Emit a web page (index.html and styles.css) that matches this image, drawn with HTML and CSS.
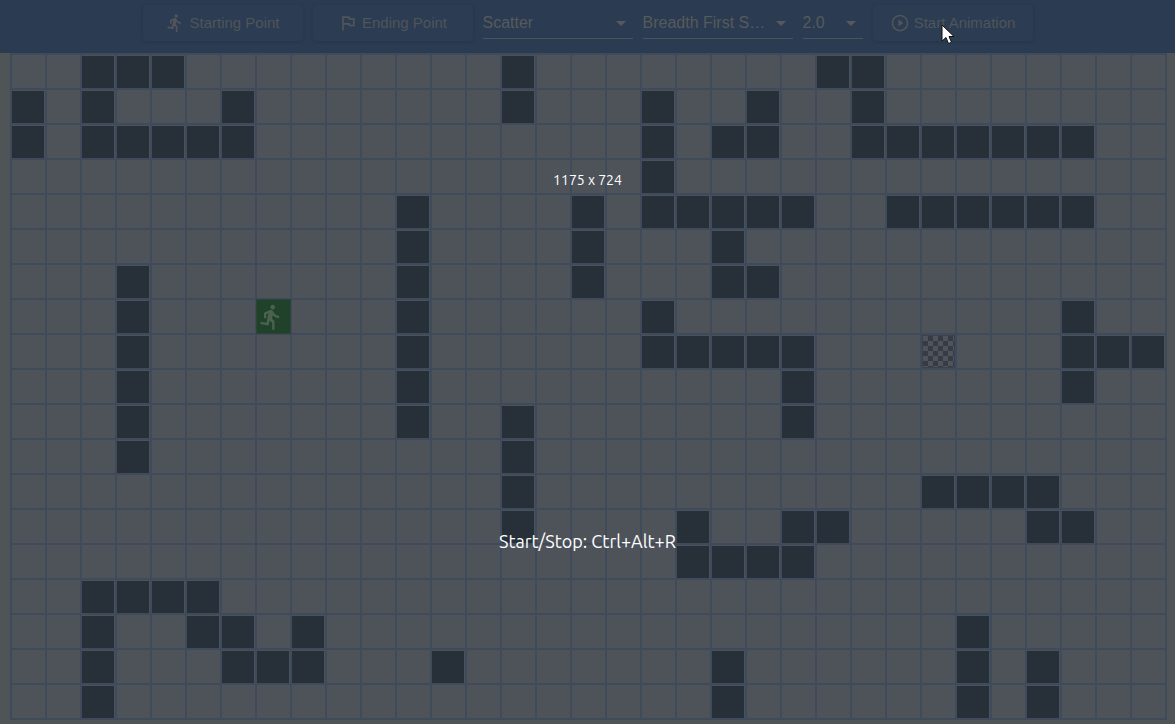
FILE: index.html
```html
<!DOCTYPE html>
<html lang="en">
<head>
<meta charset="utf-8">
<meta name="viewport" content="width=device-width, initial-scale=1">
<title>Pathfinding Visualizer</title>
<link rel="stylesheet" href="styles.css">
</head>
<body>
<header class="toolbar">
  <button class="btn" type="button">
    <svg class="icon" viewBox="0 0 24 24" aria-hidden="true"><path d="M13.49 5.48c1.1 0 2-.9 2-2s-.9-2-2-2-2 .9-2 2 .9 2 2 2zm-3.6 13.9l1-4.4 2.1 2v6h2v-7.5l-2.1-2 .6-3c1.3 1.5 3.3 2.5 5.5 2.5v-2c-1.9 0-3.5-1-4.3-2.4l-1-1.6c-.4-.6-1-1-1.7-1-.3 0-.5.1-.8.1l-5.2 2.2v4.7h2v-3.4l1.8-.7-1.6 8.1-4.9-1-.4 2 7 1.4z"/></svg>
    <span>Starting Point</span>
  </button>
  <button class="btn" type="button">
    <svg class="icon" viewBox="0 0 24 24" aria-hidden="true"><path d="M12.36 6l.4 2H18v6h-3.36l-.4-2H7V6h5.36M14 4H5v17h2v-7h5.6l.4 2h7V6h-5.6L14 4z"/></svg>
    <span>Ending Point</span>
  </button>
  <div class="field">
    <select class="select" aria-label="Maze pattern"><option>Scatter</option></select>
    <svg class="arrow" viewBox="0 0 24 24" aria-hidden="true"><path d="M7 10l5 5 5-5z"/></svg>
  </div>
  <div class="field">
    <select class="select" aria-label="Algorithm"><option>Breadth First Search</option></select>
    <svg class="arrow" viewBox="0 0 24 24" aria-hidden="true"><path d="M7 10l5 5 5-5z"/></svg>
  </div>
  <div class="field field-small">
    <select class="select" aria-label="Speed"><option>2.0</option></select>
    <svg class="arrow" viewBox="0 0 24 24" aria-hidden="true"><path d="M7 10l5 5 5-5z"/></svg>
  </div>
  <button class="btn" type="button">
    <svg class="icon" viewBox="0 0 24 24" aria-hidden="true"><path d="M10 16.5l6-4.5-6-4.5v9zM12 2C6.48 2 2 6.48 2 12s4.48 10 10 10 10-4.48 10-10S17.52 2 12 2zm0 18c-4.41 0-8-3.59-8-8s3.59-8 8-8 8 3.59 8 8-3.59 8-8 8z"/></svg>
    <span>Start Animation</span>
  </button>
</header>
<main class="board">
  <div class="grid" id="grid"></div>
</main>
<div class="overlay">
  <p class="size-label">1175 x 724</p>
  <p class="hint-label">Start/Stop: Ctrl+Alt+R</p>
</div>
<svg class="cursor" viewBox="0 0 13 21" aria-hidden="true"><path d="M1 1v16l4-3.5 2.500 6 3-1.300-2.500-5.700h5z"/></svg>
<template id="runner">
  <svg class="runner" viewBox="0 0 24 24"><path d="M13.49 5.48c1.1 0 2-.9 2-2s-.9-2-2-2-2 .9-2 2 .9 2 2 2zm-3.6 13.9l1-4.4 2.1 2v6h2v-7.5l-2.1-2 .6-3c1.3 1.5 3.3 2.5 5.5 2.5v-2c-1.9 0-3.5-1-4.3-2.4l-1-1.6c-.4-.6-1-1-1.7-1-.3 0-.5.1-.8.1l-5.2 2.2v4.7h2v-3.4l1.8-.7-1.6 8.1-4.9-1-.4 2 7 1.4z"/></svg>
</template>
<script src="grid.js"></script>
</body>
</html>
```
FILE: styles.css
```css
* { box-sizing: border-box; }

body {
  margin: 0;
  min-height: 100vh;
  position: relative;
  overflow: hidden;
  background: #4f5457;
  font-family: "Liberation Sans", Arial, sans-serif;
}

.toolbar {
  display: flex;
  justify-content: center;
  gap: 10px;
  height: 53px;
  padding-top: 5px;
  background: #2b3b51;
}

.btn {
  display: flex;
  align-items: center;
  justify-content: center;
  gap: 4px;
  width: 160px;
  height: 36px;
  padding: 0 0 1px;
  border: 0;
  border-radius: 4px;
  background: #2c3c53;
  box-shadow: 0 1px 3px #25354a;
  color: #4f5559;
  font: 15px "Liberation Sans", Arial, sans-serif;
}

.icon { width: 20px; height: 20px; fill: currentColor; }

.field {
  position: relative;
  width: 150px;
  height: 34px;
  border-bottom: 1px solid #4b535c;
}

.field-small { width: 60px; }

.select {
  appearance: none;
  width: 100%;
  height: 100%;
  padding: 2px 24px 0 0;
  border: 0;
  background: none;
  color: #565a5d;
  font: 16px "Liberation Sans", Arial, sans-serif;
  text-overflow: ellipsis;
}

.arrow {
  position: absolute;
  top: 6px;
  right: 0;
  width: 24px;
  height: 24px;
  fill: #565a5d;
  pointer-events: none;
}

.board { padding: 0 10px; }

.grid {
  display: grid;
  grid-template-columns: repeat(33, 33px);
  grid-auto-rows: 33px;
  gap: 2px;
  width: max-content;
  padding: 2px;
  background: #3f4b5a;
}

.cell { background: #4e535a; }

.wall {
  background: #272f38;
  border-top: 1px solid #48525c;
  border-right: 1px solid #48525c;
}

.start {
  display: grid;
  place-items: center start;
  background: #21422a;
  box-shadow: 0 0 0 1px #2c4538;
}

.runner { width: 28px; height: 28px; fill: #4a624e; }

.finish {
  border: 1px solid #3b424e;
  background: repeating-conic-gradient(#353c48 0 25%, #505459 0 50%) 0 0 / 10px 10px;
}

.overlay {
  position: absolute;
  inset: 0;
  pointer-events: none;
  color: #fff;
  font-family: Ubuntu, "Noto Sans", sans-serif;
  text-align: center;
}

.size-label, .hint-label {
  position: absolute;
  left: 0;
  right: 0;
  margin: 0;
}

.size-label { top: 170px; font-size: 14px; line-height: 20px; }
.hint-label { top: 529px; font-size: 18px; line-height: 24px; }

.cursor {
  position: absolute;
  left: 941px;
  top: 24px;
  width: 13px;
  height: 21px;
  fill: #fff;
  stroke: #111;
  stroke-width: 1px;
}
```
FILE: grid.js
```js
// Wall columns for each row of the board.
const COLUMNS = 33;
const walls = [
  [2, 3, 4, 14, 23, 24],
  [0, 2, 6, 14, 18, 21, 24],
  [0, 2, 3, 4, 5, 6, 18, 20, 21, 24, 25, 26, 27, 28, 29, 30],
  [18],
  [11, 16, 18, 19, 20, 21, 22, 25, 26, 27, 28, 29, 30],
  [11, 16, 20],
  [3, 11, 16, 20, 21],
  [3, 11, 18, 30],
  [3, 11, 18, 19, 20, 21, 22, 30, 31, 32],
  [3, 11, 22, 30],
  [3, 11, 14, 22],
  [3, 14],
  [14, 26, 27, 28, 29],
  [14, 19, 22, 23, 29, 30],
  [19, 20, 21, 22],
  [2, 3, 4, 5],
  [2, 5, 6, 8, 27],
  [2, 6, 7, 8, 12, 20, 27, 29],
  [2, 20, 27, 29]
];
const start = { row: 7, column: 7 };
const finish = { row: 8, column: 26 };

const grid = document.getElementById("grid");
walls.forEach((wallColumns, row) => {
  for (let column = 0; column < COLUMNS; column++) {
    const cell = document.createElement("div");
    cell.className = "cell";
    if (wallColumns.includes(column)) cell.classList.add("wall");
    if (row === start.row && column === start.column) {
      cell.classList.add("start");
      cell.append(document.getElementById("runner").content.cloneNode(true));
    }
    if (row === finish.row && column === finish.column) cell.classList.add("finish");
    grid.append(cell);
  }
});
```
